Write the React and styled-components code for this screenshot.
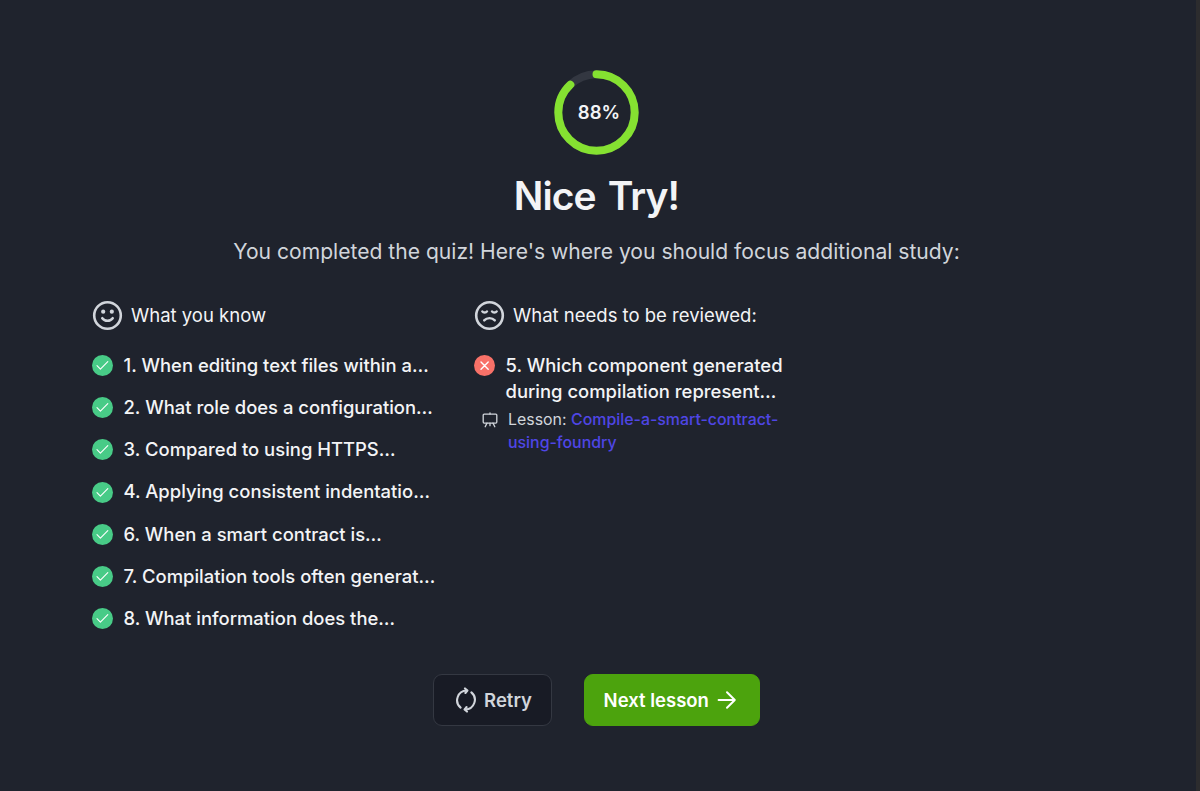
import React from "react";
import styled, { createGlobalStyle, css } from "styled-components";

const GlobalStyle = createGlobalStyle`
	* {
		box-sizing: border-box;
	}
	body {
		margin: 0;
		background: #1f232d;
		font-family: "Inter", "Liberation Sans", sans-serif;
	}
	h1, h2, p, ul {
		margin: 0;
		padding: 0;
	}
`;

const known = [
	"1. When editing text files within a…",
	"2. What role does a configuration…",
	"3. Compared to using HTTPS…",
	"4. Applying consistent indentatio…",
	"6. When a smart contract is…",
	"7. Compilation tools often generat…",
	"8. What information does the…",
];

const Page = styled.main`
	height: 791px;
	padding: 69.5px 3px 0 0;
	display: flex;
	flex-direction: column;
	align-items: center;
	border-right: 4px solid #2c2c2e;
	overflow: hidden;
`;
const Ring = styled.div`
	display: grid;
	place-items: center;
	width: 85px;
	height: 85px;
	svg,
	span {
		grid-area: 1 / 1;
	}
`;
const Score = styled.span`
	padding: 0 0 0 5px;
	font-size: 18.5px;
	line-height: 24px;
	font-weight: 600;
	color: #f3f4f6;
`;
const Title = styled.h1`
	margin-top: 17.5px;
	font-size: 39px;
	line-height: 48px;
	font-weight: 600;
	letter-spacing: -0.9px;
	word-spacing: 3px;
	color: #f3f4f6;
`;
const Subtitle = styled.p`
	margin-top: 16px;
	font-size: 21.1px;
	line-height: 32px;
	color: #d1d5db;
	white-space: nowrap;
`;
const Columns = styled.div`
	display: grid;
	grid-template-columns: 350px 350px;
	column-gap: 32px;
	width: 1009px;
	height: 375px;
	margin-top: 31px;
`;
const ColumnTitle = styled.h2`
	display: flex;
	align-items: center;
	gap: 8px;
	height: 32px;
	font-size: 18.5px;
	font-weight: 400;
	color: #f3f4f6;
	white-space: nowrap;
`;
const Questions = styled.ul`
	list-style: none;
	margin-top: 20.8px;
	display: grid;
	row-gap: 15.8px;
`;
const Question = styled.li`
	display: flex;
	align-items: flex-start;
	gap: 10.5px;
	font-size: 18.45px;
	line-height: 26.4px;
	font-weight: 500;
	color: #f3f4f6;
	white-space: nowrap;
`;
const Badge = styled.span`
	flex: none;
	display: grid;
	place-items: center;
	width: 21px;
	height: 21px;
	margin-top: 3.2px;
	border-radius: 50%;
	background: ${({ $wrong }) => ($wrong ? "#f87168" : "#48cb87")};
`;
const Lesson = styled.div`
	display: flex;
	gap: 10px;
	padding: 2.9px 0 0 8px;
	font-size: 15.9px;
	line-height: 23.8px;
	color: #d1d5db;
	svg {
		flex: none;
		margin-top: 4px;
	}
`;
const LessonLink = styled.a`
	font-weight: 500;
	color: #4f46e5;
`;
const Actions = styled.div`
	display: flex;
	gap: 32px;
`;
const Button = styled.button`
	display: flex;
	align-items: center;
	justify-content: center;
	gap: 7px;
	width: 119px;
	height: 52px;
	padding: 0 0 0 2px;
	border: 1px solid #343842;
	border-radius: 9px;
	background: #181b25;
	color: #d1d5db;
	font: 600 18.5px "Inter", sans-serif;
	white-space: nowrap;
	${({ $primary }) =>
		$primary &&
		css`
			width: 176px;
			gap: 8.5px;
			padding: 0 3px 0 0;
			border-color: #4ca30d;
			background: #4ca30d;
			color: #fff;
		`}
`;

function ScoreRing({ value }) {
	return (
		<Ring>
			<svg width='85' height='85' viewBox='0 0 85 85' fill='none' strokeWidth='8'>
				<circle cx='42.5' cy='42.5' r='38.2' stroke='#333741' />
				<circle
					cx='42.5'
					cy='42.5'
					r='38.2'
					stroke='#85e131'
					strokeLinecap='round'
					pathLength='100'
					strokeDasharray={`${value} 100`}
					transform='rotate(-90 42.5 42.5)'
				/>
			</svg>
			<Score>{value}%</Score>
		</Ring>
	);
}

function Face({ sad }) {
	return (
		<svg
			width='31'
			height='31'
			viewBox='0 0 31 31'
			fill='none'
			stroke='#d1d5db'
			strokeWidth='2.6'
			strokeLinecap='round'
		>
			<circle cx='15.5' cy='15.5' r='13.3' />
			{sad ? (
				<path
					strokeWidth='2.4'
					d='M8.3 11.4c1 1.5 3.7 1.5 4.7 0M18 11.4c1 1.5 3.7 1.5 4.7 0M10.2 20.4c2.7-3 7.9-3 10.6 0'
				/>
			) : (
				<>
					<path d='M10.3 18.2c2.5 3.4 7.9 3.4 10.4 0' />
					<circle cx='11.2' cy='11.7' r='2.1' fill='#d1d5db' stroke='none' />
					<circle cx='19.8' cy='11.7' r='2.1' fill='#d1d5db' stroke='none' />
				</>
			)}
		</svg>
	);
}

function Mark({ wrong }) {
	return (
		<Badge $wrong={wrong}>
			<svg
				width='21'
				height='21'
				viewBox='0 0 21 21'
				fill='none'
				stroke='#fff'
				strokeWidth={wrong ? 1.4 : 1.1}
				strokeLinecap='round'
				strokeLinejoin='round'
			>
				<path d={wrong ? "M7 7l7.2 7.2M14.2 7L7 14.2" : "M5 10.7l3.4 3.4 7.4-7.4"} />
			</svg>
		</Badge>
	);
}

export default function QuizResult() {
	return (
		<>
			<GlobalStyle />
			<Page>
				<ScoreRing value={88} />
				<Title>Nice Try!</Title>
				<Subtitle>
					You completed the quiz! Here's where you should focus additional study:
				</Subtitle>
				<Columns>
					<section>
						<ColumnTitle>
							<Face /> What you know
						</ColumnTitle>
						<Questions>
							{known.map((q) => (
								<Question key={q}>
									<Mark />
									{q}
								</Question>
							))}
						</Questions>
					</section>
					<section>
						<ColumnTitle>
							<Face sad /> What needs to be reviewed:
						</ColumnTitle>
						<Questions as='div'>
							<div>
								<Question as='div'>
									<Mark wrong />
									<span>
										5. Which component generated
										<br />
										during compilation represent…
									</span>
								</Question>
								<Lesson>
									<svg
										width='16'
										height='16'
										viewBox='0 0 16 16'
										fill='none'
										stroke='#d1d5db'
										strokeWidth='1.3'
										strokeLinecap='round'
										strokeLinejoin='round'
									>
										<rect x='1.2' y='2.1' width='13.6' height='9' rx='1' />
										<path d='M8 .8v1.3M8 11.1v2.6M5 11.1l-1.8 3.6M11 11.1l1.8 3.6' />
									</svg>
									<span>
										Lesson:{" "}
										<LessonLink>
											Compile-a-smart-contract-
											<br />
											using-foundry
										</LessonLink>
									</span>
								</Lesson>
							</div>
						</Questions>
					</section>
				</Columns>
				<Actions>
					<Button>
						<svg
							width='22'
							height='26'
							viewBox='1 0 22 26'
							fill='none'
							stroke='currentColor'
							strokeWidth='2.1'
							strokeLinecap='round'
							strokeLinejoin='round'
						>
							<path d='M6.6 20.6A9.7 9.7 0 0 1 12.6 3.5M17.4 5.4A9.7 9.7 0 0 1 11.4 22.5' />
							<path d='M11 1.4l2.4 2.2-2 2.4M13 24.6l-2.4-2.2 2-2.4' />
						</svg>
						Retry
					</Button>
					<Button $primary>
						Next lesson
						<svg
							width='20'
							height='20'
							viewBox='0 0 20 20'
							fill='none'
							stroke='currentColor'
							strokeWidth='2'
							strokeLinecap='round'
							strokeLinejoin='round'
						>
							<path d='M1.6 10h16.2M10 2.2l7.8 7.8-7.8 7.8' />
						</svg>
					</Button>
				</Actions>
			</Page>
		</>
	);
}
